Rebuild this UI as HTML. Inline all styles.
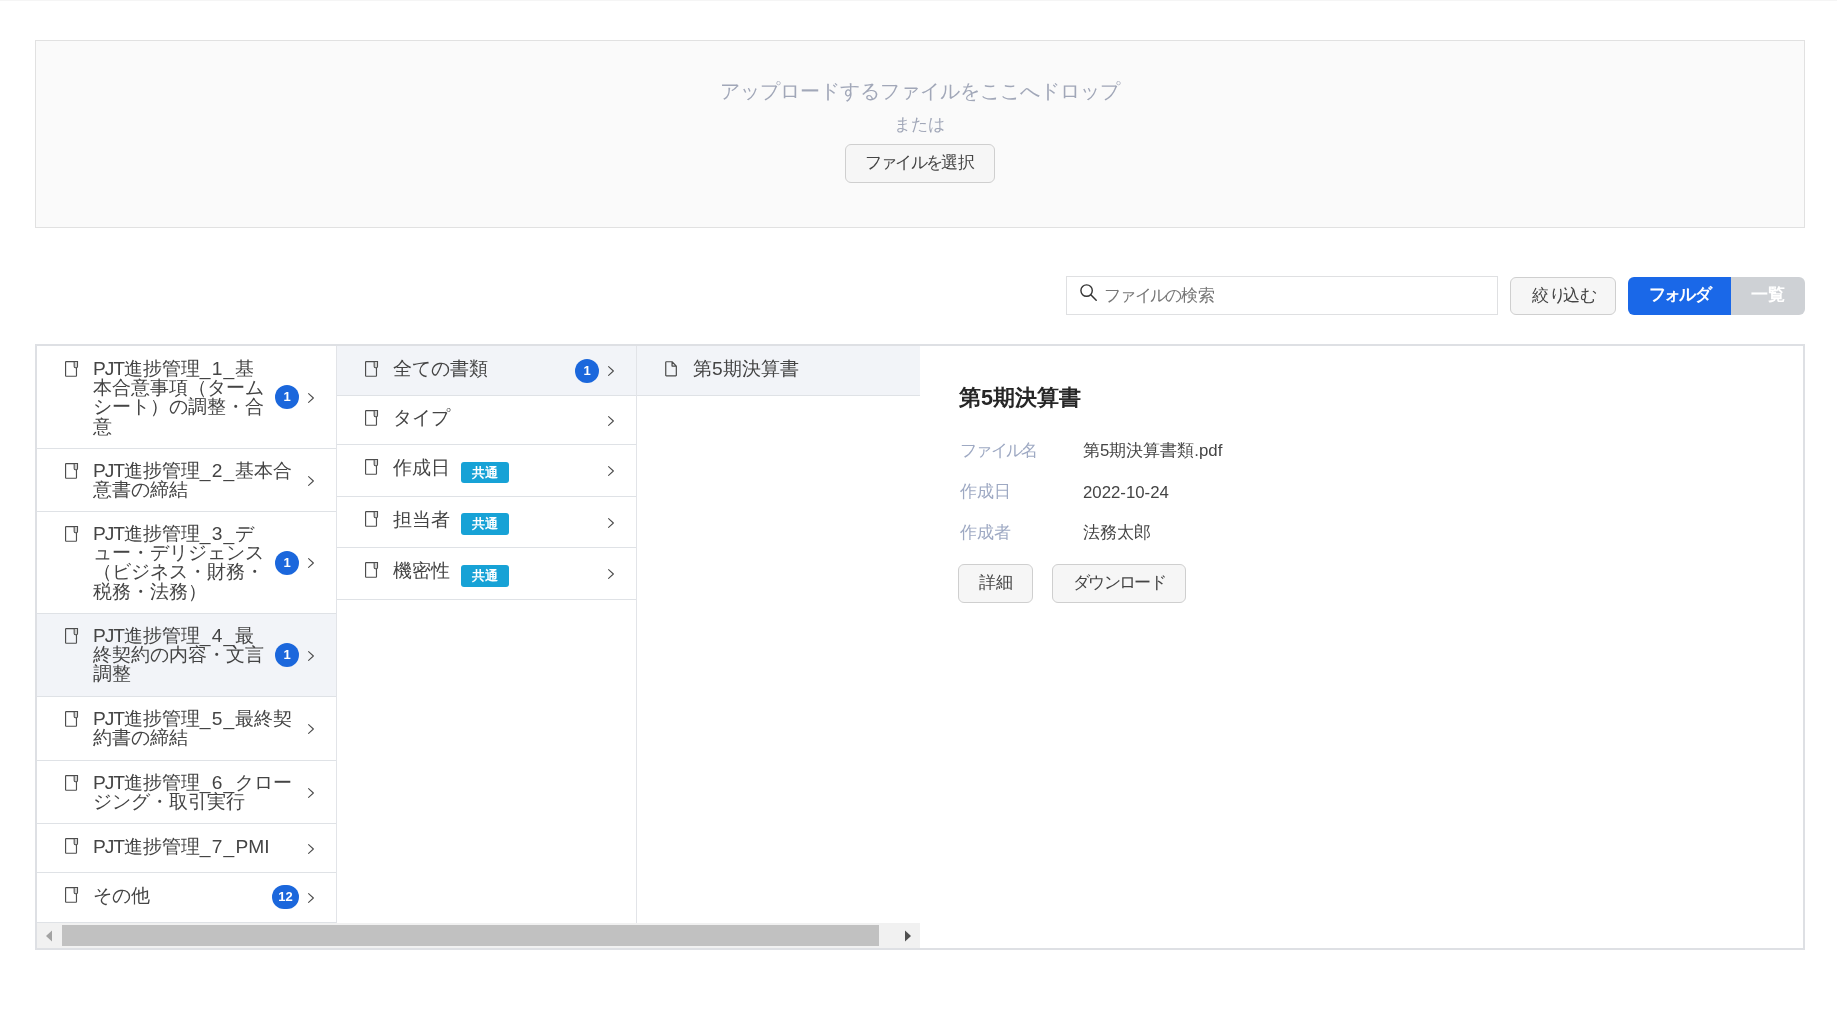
<!DOCTYPE html>
<html lang="ja">
<head>
<meta charset="utf-8">
<title>Files</title>
<style>
*{box-sizing:border-box;margin:0;padding:0}
html,body{width:1837px;height:1023px;overflow:hidden;background:#fff}
body{font-family:"Liberation Sans",sans-serif;color:#444;position:relative;will-change:transform}
.abs{position:absolute}
.topline{left:0;top:0;width:1837px;height:1px;background:#f5f5f5}
/* dropzone */
#drop{left:35px;top:40px;width:1770px;height:188px;border:1px solid #e1e1e1;background:#fafafa}
.dz-title{left:0;width:1768px;top:34.5px;text-align:center;font-size:20px;line-height:30px;color:#a1a7b8;white-space:nowrap}
.dz-or{left:-1px;width:1768px;top:71.5px;text-align:center;font-size:16.8px;line-height:24px;color:#a1a7b8;white-space:nowrap}
.btn{border:1px solid #cfcfcf;background:#f6f6f6;border-radius:6px;color:#444;font-size:16.8px;text-align:center;white-space:nowrap}
.k{letter-spacing:-0.1em}
/* toolbar */
#search{left:1066px;top:276px;width:432px;height:39px;border:1px solid #dfe0e2;background:#fff}
#search .ph{left:37px;top:0;line-height:37px;font-size:16.8px;color:#767676;white-space:nowrap}
/* panel */
#panel{left:35px;top:344px;width:1770px;height:606px;border:2px solid #dee0e4;background:#fff}
.col{top:0}
.row{position:absolute;left:0;border-bottom:1px solid #dfe2e6}
.row.sel{background:#f2f4f8}
.row .tx{position:absolute;left:56px;font-size:19.2px;line-height:19.2px;color:#444;white-space:nowrap}
.row .ic{position:absolute;left:28px}
.l1{letter-spacing:-1.1px}.l2{letter-spacing:1.2px}
.cnt{position:absolute;width:24px;height:24px;border-radius:12px;background:#1b67dc;color:#fff;font-size:13px;font-weight:bold;line-height:24px;text-align:center}
.chev{position:absolute;width:8px;height:12px}
.tag{position:absolute;left:124px;width:48px;height:21.4px;border-radius:3px;background:#17a2d6;color:#fff;font-size:13.4px;font-weight:bold;line-height:21.4px;text-align:center;letter-spacing:0.8px;text-indent:0.8px}
/* detail */
.lbl{left:923px;font-size:16.8px;line-height:20px;color:#9ea9c3;white-space:nowrap}
.val{left:1046px;font-size:16.8px;line-height:20px;color:#444;white-space:nowrap}
</style>
</head>
<body>
<div class="abs topline"></div>

<!-- DROPZONE -->
<div id="drop" class="abs">
  <div class="abs dz-title">アップロードするファイルをここへドロップ</div>
  <div class="abs dz-or">または</div>
  <div class="abs btn" style="left:809px;top:103px;width:150px;height:39px;line-height:36px"><span class="k">ファイルを</span>選択</div>
</div>

<!-- TOOLBAR -->
<div id="search" class="abs">
  <svg class="abs" style="left:12px;top:6px" width="19" height="19" viewBox="0 0 19 19"><circle cx="7.6" cy="7.6" r="5.7" fill="none" stroke="#333" stroke-width="1.4"/><path d="M11.8 11.8 L17.2 17.2" stroke="#333" stroke-width="1.5" stroke-linecap="round"/></svg>
  <div class="abs ph"><span class="k">ファイルの</span>検索</div>
</div>
<div class="abs btn" style="left:1510px;top:277px;width:106px;height:38px;line-height:35px">絞<span class="k" style="letter-spacing:-0.16em">り</span>込<span class="k" style="letter-spacing:-0.16em">む</span></div>
<div class="abs" style="left:1628px;top:277px;width:103px;height:38px;background:#1a68e8;border-radius:6px 0 0 6px;color:#fff;font-size:16.8px;font-weight:bold;line-height:36px;text-align:center"><span class="k">フォルダ</span></div>
<div class="abs" style="left:1731px;top:277px;width:74px;height:38px;background:#ced1d5;border-radius:0 6px 6px 0;color:#fff;font-size:16.8px;font-weight:bold;line-height:36px;text-align:center">一覧</div>

<!-- MAIN PANEL -->
<div id="panel" class="abs">
  <!-- inner origin = (37,346) -->
  <!-- column 1 -->
  <div id="c1" class="abs col" style="left:0;width:300px;height:577px;border-right:1px solid #e2e4e8"><div class="row" style="top:0px;width:299px;height:103px"><svg class="ic" style="top:15px" width="13.5" height="16.3" viewBox="0 0 14 17" preserveAspectRatio="none"><rect x="0.6" y="0.6" width="11.3" height="15.3" rx="0.6" fill="none" stroke="#4d4d4d" stroke-width="1.2"/><path d="M9.5 0.6 H13 V5.8 a1.2 1.2 0 0 1 -1.2 1.2 h-1.1 a1.2 1.2 0 0 1 -1.2 -1.2 z" fill="#d0d0d0" stroke="#4d4d4d" stroke-width="1.1"/></svg><div class="tx" style="top:13px"><span class="l1">PJT</span>進捗管理<span class="l2">_1_</span>基<br>本合意事項（ターム<br>シート）の調整・合<br>意</div><div class="cnt" style="left:238px;top:39.0px;width:24px">1</div><svg class="chev" style="left:270px;top:45.5px" width="8" height="12" viewBox="0 0 8 12"><path d="M1.6 1.6 L6.4 6 L1.6 10.4" fill="none" stroke="#4a4a4a" stroke-width="1.05" stroke-linecap="round" stroke-linejoin="round"/></svg></div><div class="row" style="top:103px;width:299px;height:63px"><svg class="ic" style="top:14.3px" width="13.5" height="16.3" viewBox="0 0 14 17" preserveAspectRatio="none"><rect x="0.6" y="0.6" width="11.3" height="15.3" rx="0.6" fill="none" stroke="#4d4d4d" stroke-width="1.2"/><path d="M9.5 0.6 H13 V5.8 a1.2 1.2 0 0 1 -1.2 1.2 h-1.1 a1.2 1.2 0 0 1 -1.2 -1.2 z" fill="#d0d0d0" stroke="#4d4d4d" stroke-width="1.1"/></svg><div class="tx" style="top:12px"><span class="l1">PJT</span>進捗管理<span class="l2">_2_</span>基本合<br>意書の締結</div><svg class="chev" style="left:270px;top:25.5px" width="8" height="12" viewBox="0 0 8 12"><path d="M1.6 1.6 L6.4 6 L1.6 10.4" fill="none" stroke="#4a4a4a" stroke-width="1.05" stroke-linecap="round" stroke-linejoin="round"/></svg></div><div class="row" style="top:166px;width:299px;height:102px"><svg class="ic" style="top:14.3px" width="13.5" height="16.3" viewBox="0 0 14 17" preserveAspectRatio="none"><rect x="0.6" y="0.6" width="11.3" height="15.3" rx="0.6" fill="none" stroke="#4d4d4d" stroke-width="1.2"/><path d="M9.5 0.6 H13 V5.8 a1.2 1.2 0 0 1 -1.2 1.2 h-1.1 a1.2 1.2 0 0 1 -1.2 -1.2 z" fill="#d0d0d0" stroke="#4d4d4d" stroke-width="1.1"/></svg><div class="tx" style="top:12px"><span class="l1">PJT</span>進捗管理<span class="l2">_3_</span>デ<br>ュー・デリジェンス<br>（ビジネス・財務・<br>税務・法務）</div><div class="cnt" style="left:238px;top:38.5px;width:24px">1</div><svg class="chev" style="left:270px;top:45.0px" width="8" height="12" viewBox="0 0 8 12"><path d="M1.6 1.6 L6.4 6 L1.6 10.4" fill="none" stroke="#4a4a4a" stroke-width="1.05" stroke-linecap="round" stroke-linejoin="round"/></svg></div><div class="row sel" style="top:268px;width:299px;height:83px"><svg class="ic" style="top:14.3px" width="13.5" height="16.3" viewBox="0 0 14 17" preserveAspectRatio="none"><rect x="0.6" y="0.6" width="11.3" height="15.3" rx="0.6" fill="none" stroke="#4d4d4d" stroke-width="1.2"/><path d="M9.5 0.6 H13 V5.8 a1.2 1.2 0 0 1 -1.2 1.2 h-1.1 a1.2 1.2 0 0 1 -1.2 -1.2 z" fill="#d0d0d0" stroke="#4d4d4d" stroke-width="1.1"/></svg><div class="tx" style="top:12px"><span class="l1">PJT</span>進捗管理<span class="l2">_4_</span>最<br>終契約の内容・文言<br>調整</div><div class="cnt" style="left:238px;top:29.0px;width:24px">1</div><svg class="chev" style="left:270px;top:35.5px" width="8" height="12" viewBox="0 0 8 12"><path d="M1.6 1.6 L6.4 6 L1.6 10.4" fill="none" stroke="#4a4a4a" stroke-width="1.05" stroke-linecap="round" stroke-linejoin="round"/></svg></div><div class="row" style="top:351px;width:299px;height:64px"><svg class="ic" style="top:14.3px" width="13.5" height="16.3" viewBox="0 0 14 17" preserveAspectRatio="none"><rect x="0.6" y="0.6" width="11.3" height="15.3" rx="0.6" fill="none" stroke="#4d4d4d" stroke-width="1.2"/><path d="M9.5 0.6 H13 V5.8 a1.2 1.2 0 0 1 -1.2 1.2 h-1.1 a1.2 1.2 0 0 1 -1.2 -1.2 z" fill="#d0d0d0" stroke="#4d4d4d" stroke-width="1.1"/></svg><div class="tx" style="top:12px"><span class="l1">PJT</span>進捗管理<span class="l2">_5_</span>最終契<br>約書の締結</div><svg class="chev" style="left:270px;top:26.0px" width="8" height="12" viewBox="0 0 8 12"><path d="M1.6 1.6 L6.4 6 L1.6 10.4" fill="none" stroke="#4a4a4a" stroke-width="1.05" stroke-linecap="round" stroke-linejoin="round"/></svg></div><div class="row" style="top:415px;width:299px;height:63px"><svg class="ic" style="top:14.3px" width="13.5" height="16.3" viewBox="0 0 14 17" preserveAspectRatio="none"><rect x="0.6" y="0.6" width="11.3" height="15.3" rx="0.6" fill="none" stroke="#4d4d4d" stroke-width="1.2"/><path d="M9.5 0.6 H13 V5.8 a1.2 1.2 0 0 1 -1.2 1.2 h-1.1 a1.2 1.2 0 0 1 -1.2 -1.2 z" fill="#d0d0d0" stroke="#4d4d4d" stroke-width="1.1"/></svg><div class="tx" style="top:12px"><span class="l1">PJT</span>進捗管理<span class="l2">_6_</span>クロー<br>ジング・取引実行</div><svg class="chev" style="left:270px;top:25.5px" width="8" height="12" viewBox="0 0 8 12"><path d="M1.6 1.6 L6.4 6 L1.6 10.4" fill="none" stroke="#4a4a4a" stroke-width="1.05" stroke-linecap="round" stroke-linejoin="round"/></svg></div><div class="row" style="top:478px;width:299px;height:49px"><svg class="ic" style="top:14.3px" width="13.5" height="16.3" viewBox="0 0 14 17" preserveAspectRatio="none"><rect x="0.6" y="0.6" width="11.3" height="15.3" rx="0.6" fill="none" stroke="#4d4d4d" stroke-width="1.2"/><path d="M9.5 0.6 H13 V5.8 a1.2 1.2 0 0 1 -1.2 1.2 h-1.1 a1.2 1.2 0 0 1 -1.2 -1.2 z" fill="#d0d0d0" stroke="#4d4d4d" stroke-width="1.1"/></svg><div class="tx" style="top:12.6px"><span class="l1">PJT</span>進捗管理<span class="l2">_7_</span>PMI</div><svg class="chev" style="left:270px;top:18.5px" width="8" height="12" viewBox="0 0 8 12"><path d="M1.6 1.6 L6.4 6 L1.6 10.4" fill="none" stroke="#4a4a4a" stroke-width="1.05" stroke-linecap="round" stroke-linejoin="round"/></svg></div><div class="row" style="top:527px;width:299px;height:50px"><svg class="ic" style="top:14.3px" width="13.5" height="16.3" viewBox="0 0 14 17" preserveAspectRatio="none"><rect x="0.6" y="0.6" width="11.3" height="15.3" rx="0.6" fill="none" stroke="#4d4d4d" stroke-width="1.2"/><path d="M9.5 0.6 H13 V5.8 a1.2 1.2 0 0 1 -1.2 1.2 h-1.1 a1.2 1.2 0 0 1 -1.2 -1.2 z" fill="#d0d0d0" stroke="#4d4d4d" stroke-width="1.1"/></svg><div class="tx" style="top:12.6px">その他</div><div class="cnt" style="left:235px;top:12px;width:27px">12</div><svg class="chev" style="left:270px;top:18.5px" width="8" height="12" viewBox="0 0 8 12"><path d="M1.6 1.6 L6.4 6 L1.6 10.4" fill="none" stroke="#4a4a4a" stroke-width="1.05" stroke-linecap="round" stroke-linejoin="round"/></svg></div></div>
  <!-- column 2 -->
  <div id="c2" class="abs col" style="left:300px;width:300px;height:577px;border-right:1px solid #e2e4e8"><div class="row sel" style="top:0px;width:299px;height:50px"><svg class="ic" style="top:15px" width="13.5" height="16.3" viewBox="0 0 14 17" preserveAspectRatio="none"><rect x="0.6" y="0.6" width="11.3" height="15.3" rx="0.6" fill="none" stroke="#4d4d4d" stroke-width="1.2"/><path d="M9.5 0.6 H13 V5.8 a1.2 1.2 0 0 1 -1.2 1.2 h-1.1 a1.2 1.2 0 0 1 -1.2 -1.2 z" fill="#d0d0d0" stroke="#4d4d4d" stroke-width="1.1"/></svg><div class="tx" style="top:13px">全ての書類</div><div class="cnt" style="left:238px;top:12.5px;width:24px">1</div><svg class="chev" style="left:270px;top:19.0px" width="8" height="12" viewBox="0 0 8 12"><path d="M1.6 1.6 L6.4 6 L1.6 10.4" fill="none" stroke="#4a4a4a" stroke-width="1.05" stroke-linecap="round" stroke-linejoin="round"/></svg></div><div class="row" style="top:50px;width:299px;height:49px"><svg class="ic" style="top:14.3px" width="13.5" height="16.3" viewBox="0 0 14 17" preserveAspectRatio="none"><rect x="0.6" y="0.6" width="11.3" height="15.3" rx="0.6" fill="none" stroke="#4d4d4d" stroke-width="1.2"/><path d="M9.5 0.6 H13 V5.8 a1.2 1.2 0 0 1 -1.2 1.2 h-1.1 a1.2 1.2 0 0 1 -1.2 -1.2 z" fill="#d0d0d0" stroke="#4d4d4d" stroke-width="1.1"/></svg><div class="tx" style="top:11.8px">タイプ</div><svg class="chev" style="left:270px;top:18.5px" width="8" height="12" viewBox="0 0 8 12"><path d="M1.6 1.6 L6.4 6 L1.6 10.4" fill="none" stroke="#4a4a4a" stroke-width="1.05" stroke-linecap="round" stroke-linejoin="round"/></svg></div><div class="row" style="top:99px;width:299px;height:52px"><svg class="ic" style="top:13.8px" width="13.5" height="16.3" viewBox="0 0 14 17" preserveAspectRatio="none"><rect x="0.6" y="0.6" width="11.3" height="15.3" rx="0.6" fill="none" stroke="#4d4d4d" stroke-width="1.2"/><path d="M9.5 0.6 H13 V5.8 a1.2 1.2 0 0 1 -1.2 1.2 h-1.1 a1.2 1.2 0 0 1 -1.2 -1.2 z" fill="#d0d0d0" stroke="#4d4d4d" stroke-width="1.1"/></svg><div class="tx" style="top:13px">作成日</div><svg class="chev" style="left:270px;top:20.0px" width="8" height="12" viewBox="0 0 8 12"><path d="M1.6 1.6 L6.4 6 L1.6 10.4" fill="none" stroke="#4a4a4a" stroke-width="1.05" stroke-linecap="round" stroke-linejoin="round"/></svg><div class="tag" style="top:17px">共通</div></div><div class="row" style="top:151px;width:299px;height:51px"><svg class="ic" style="top:13.5px" width="13.5" height="16.3" viewBox="0 0 14 17" preserveAspectRatio="none"><rect x="0.6" y="0.6" width="11.3" height="15.3" rx="0.6" fill="none" stroke="#4d4d4d" stroke-width="1.2"/><path d="M9.5 0.6 H13 V5.8 a1.2 1.2 0 0 1 -1.2 1.2 h-1.1 a1.2 1.2 0 0 1 -1.2 -1.2 z" fill="#d0d0d0" stroke="#4d4d4d" stroke-width="1.1"/></svg><div class="tx" style="top:13px">担当者</div><svg class="chev" style="left:270px;top:19.5px" width="8" height="12" viewBox="0 0 8 12"><path d="M1.6 1.6 L6.4 6 L1.6 10.4" fill="none" stroke="#4a4a4a" stroke-width="1.05" stroke-linecap="round" stroke-linejoin="round"/></svg><div class="tag" style="top:16.3px">共通</div></div><div class="row" style="top:202px;width:299px;height:52px"><svg class="ic" style="top:13.5px" width="13.5" height="16.3" viewBox="0 0 14 17" preserveAspectRatio="none"><rect x="0.6" y="0.6" width="11.3" height="15.3" rx="0.6" fill="none" stroke="#4d4d4d" stroke-width="1.2"/><path d="M9.5 0.6 H13 V5.8 a1.2 1.2 0 0 1 -1.2 1.2 h-1.1 a1.2 1.2 0 0 1 -1.2 -1.2 z" fill="#d0d0d0" stroke="#4d4d4d" stroke-width="1.1"/></svg><div class="tx" style="top:13px">機密性</div><svg class="chev" style="left:270px;top:20.0px" width="8" height="12" viewBox="0 0 8 12"><path d="M1.6 1.6 L6.4 6 L1.6 10.4" fill="none" stroke="#4a4a4a" stroke-width="1.05" stroke-linecap="round" stroke-linejoin="round"/></svg><div class="tag" style="top:17.2px">共通</div></div></div>
  <!-- column 3 -->
  <div id="c3" class="abs col" style="left:600px;width:283px;height:577px"><div class="row sel" style="top:0px;width:283px;height:50px"><svg class="ic" style="top:15px" width="13" height="16" viewBox="0 0 14 17" preserveAspectRatio="none"><path d="M1.5 0.8 H7.6 L12.2 5.4 V15.1 a0.7 0.7 0 0 1 -0.7 0.7 H1.5 a0.7 0.7 0 0 1 -0.7 -0.7 V1.5 a0.7 0.7 0 0 1 0.7 -0.7 z M7.6 0.8 V5.4 H12.2" fill="none" stroke="#4a4a4a" stroke-width="1.3" stroke-linejoin="round"/></svg><div class="tx" style="top:13px">第5期決算書</div></div></div>
  <!-- scrollbar -->
  <div id="sb" class="abs" style="left:0;top:577px;width:883px;height:25px;background:#f1f1f1"><div class="abs" style="left:25px;top:2px;width:817px;height:21px;background:#c1c1c1"></div><svg class="abs" style="left:8px;top:6.5px" width="8" height="12" viewBox="0 0 8 12"><path d="M7 0.5 L1 6 L7 11.5 z" fill="#a3a3a3"/></svg><svg class="abs" style="left:867px;top:6.5px" width="8" height="12" viewBox="0 0 8 12"><path d="M1 0.5 L7 6 L1 11.5 z" fill="#505050"/></svg></div>
  <!-- detail -->
  <div id="detail">
  <div class="abs" style="left:922px;top:38px;font-size:21.6px;font-weight:bold;line-height:28px;color:#262626;white-space:nowrap">第5期決算書</div>
  <div class="abs lbl" style="top:95px"><span class="k">ファイル</span>名</div><div class="abs val" style="top:95px">第5期決算書類.pdf</div>
  <div class="abs lbl" style="top:136px">作成日</div><div class="abs val" style="top:136.7px">2022-10-24</div>
  <div class="abs lbl" style="top:177px">作成者</div><div class="abs val" style="top:177px">法務太郎</div>
  <div class="abs btn" style="left:921px;top:218px;width:75px;height:39px;line-height:36px">詳細</div>
  <div class="abs btn" style="left:1015px;top:218px;width:134px;height:39px;line-height:36px"><span class="k">ダウンロード</span></div>
</div>
</div>
</body>
</html>
